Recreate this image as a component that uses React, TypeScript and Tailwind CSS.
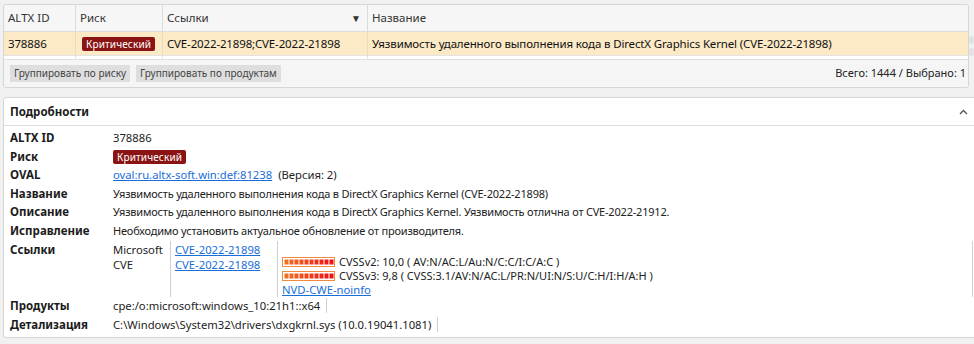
import React from "react";

const font = { fontFamily: '"Noto Sans", "Open Sans", sans-serif' };

function CvssBar({ filled }: { filled: number }) {
  const segs = Array.from({ length: 10 });
  return (
    <svg width="53" height="10" viewBox="0 0 53 10" className="shrink-0">
      <rect x="0.5" y="0.5" width="52" height="9" fill="#fff" stroke="#f08a3c" />
      {segs.map((_, i) => {
        const t = i / 9;
        const g = Math.round(110 - t * 95);
        const b = Math.round(30 - t * 12);
        return (
          <rect
            key={i}
            x={2.5 + i * 5}
            y={2.5}
            width={4}
            height={5}
            fill={i < filled ? `rgb(240,${g},${b})` : "#f4c9a8"}
          />
        );
      })}
    </svg>
  );
}

function Badge() {
  return (
    <span className="inline-flex items-center h-[14px] px-[4px] rounded-[2px] bg-[#8a1414] text-white text-[10px] leading-none tracking-[0.15px]">
      Критический
    </span>
  );
}

function Row({ label, children, latin }: { label: string; children: React.ReactNode; latin?: boolean }) {
  return (
    <div className="flex items-start min-h-[18.5px]">
      <div className="w-[103px] shrink-0 font-bold text-[11.5px] leading-[18.5px] text-[#1b1b1b]">{label}</div>
      <div
        className={
          latin
            ? "flex-1 text-[11.25px] leading-[18.5px] text-[#222]"
            : "flex-1 text-[11px] tracking-[-0.2px] leading-[18.5px] text-[#222]"
        }
      >
        {children}
      </div>
    </div>
  );
}

export default function App() {
  return (
    <div className="w-[974px] h-[344px] bg-[#f1f1f1] overflow-hidden relative" style={font}>
      {/* Top table panel */}
      <div className="ml-[3px] mt-[4px] w-[966px] h-[84px] border border-[#d6d6d6] rounded-[3px] bg-[#f7f7f7] flex flex-col overflow-hidden">
        <div className="flex h-[27px] border-b border-[#dcdcdc] bg-[#f6f6f6] text-[11.5px] text-[#333]">
          <div className="w-[72px] shrink-0 px-[4px] flex items-center border-r border-[#dcdcdc]">ALTX ID</div>
          <div className="w-[87px] shrink-0 px-[4px] flex items-center border-r border-[#dcdcdc]">Риск</div>
          <div className="w-[205px] shrink-0 px-[4px] pr-[6px] flex items-center justify-between border-r border-[#dcdcdc]">
            <span>Ссылки</span>
            <span className="text-[10px] text-[#333]">▼</span>
          </div>
          <div className="flex-1 px-[4px] flex items-center">Название</div>
        </div>
        <div className="flex h-[24px] bg-[#fce9c6] text-[11.5px] tracking-[-0.15px] text-[#111] border-b border-[#e3e3e3]">
          <div className="w-[72px] shrink-0 px-[4px] flex items-center border-r border-[#e6dcc6]">378886</div>
          <div className="w-[87px] shrink-0 pl-[6px] flex items-center border-r border-[#e6dcc6]">
            <Badge />
          </div>
          <div className="w-[205px] shrink-0 px-[4px] flex items-center border-r border-[#e6dcc6]">CVE-2022-21898;CVE-2022-21898</div>
          <div className="flex-1 px-[4px] flex items-center">Уязвимость удаленного выполнения кода в DirectX Graphics Kernel (CVE-2022-21898)</div>
        </div>
        <div className="flex h-[3px] bg-white">
          <div className="w-[72px] border-r border-[#e3e3e3]" />
          <div className="w-[87px] border-r border-[#e3e3e3]" />
          <div className="w-[205px] border-r border-[#e3e3e3]" />
          <div className="flex-1" />
        </div>
        <div className="flex-1 flex items-center justify-between px-[6px] border-t border-[#e0e0e0] bg-[#f5f5f5]">
          <div className="flex gap-[6px]">
            <span className="h-[17px] px-[4px] bg-[#dedede] text-[10px] text-[#444] flex items-center">Группировать по риску</span>
            <span className="h-[17px] px-[4px] bg-[#dedede] text-[10px] text-[#444] flex items-center">Группировать по продуктам</span>
          </div>
          <span className="text-[11px] text-[#222] -mr-[4px]">Всего: 1444 / Выбрано: 1</span>
        </div>
      </div>
      {/* scrollbar bits */}
      <div className="absolute left-[969px] top-[36px] w-[5px] h-[8px] rounded-[2px] bg-[#e2e2e2]" />
      <div className="absolute left-[969px] top-[48px] w-[5px] h-[8px] rounded-[2px] bg-[#e2e2e2]" />

      {/* Details panel */}
      <div className="ml-[3px] mt-[9px] w-[975px] h-[241px] border border-[#d6d6d6] rounded-[3px] bg-white flex flex-col">
        <div className="h-[28px] shrink-0 flex items-center justify-between pl-[6px] pr-[8px] border-b border-[#dcdcdc]">
          <span className="font-bold text-[11.5px] text-[#1b1b1b]">Подробности</span>
          <svg width="9" height="6" viewBox="0 0 9 6" className="mr-[1px]">
            <path d="M1 5 L4.5 1.5 L8 5" fill="none" stroke="#555" strokeWidth="1.4" />
          </svg>
        </div>
        <div className="pl-[6px] pt-[3px] flex flex-col">
          <Row label="ALTX ID" latin>378886</Row>
          <Row label="Риск">
            <Badge />
          </Row>
          <Row label="OVAL" latin>
            <span className="text-[#1a6ed8] underline">oval:ru.altx-soft.win:def:81238</span>
            <span className="ml-[6px]">(Версия: 2)</span>
          </Row>
          <Row label="Название">Уязвимость удаленного выполнения кода в DirectX Graphics Kernel (CVE-2022-21898)</Row>
          <Row label="Описание">
            Уязвимость удаленного выполнения кода в DirectX Graphics Kernel. Уязвимость отлична от CVE-2022-21912.
          </Row>
          <Row label="Исправление">Необходимо установить актуальное обновление от производителя.</Row>
          <div className="flex items-start mt-[1px]">
            <div className="w-[103px] shrink-0 font-bold text-[11.5px] leading-[15px] text-[#1b1b1b] pt-[1px]">Ссылки</div>
            <div className="flex-1 flex h-[56px] text-[11.25px] leading-[15px] text-[#222]">
              <div className="w-[58px] shrink-0 pt-[1px] border-r border-[#d0d0d0]">
                <div>Microsoft</div>
                <div>CVE</div>
              </div>
              <div className="w-[107px] shrink-0 pl-[4px] pt-[1px] border-r border-[#d0d0d0]">
                <div className="text-[#1a6ed8] underline">CVE-2022-21898</div>
                <div className="text-[#1a6ed8] underline">CVE-2022-21898</div>
              </div>
              <div className="flex-1 pl-[4px] pt-[14px] border-r border-[#d0d0d0] mr-[4px] text-[11px] leading-[14px]">
                <div className="flex items-center gap-[4px]">
                  <CvssBar filled={10} />
                  <span>CVSSv2: 10,0 ( AV:N/AC:L/Au:N/C:C/I:C/A:C )</span>
                </div>
                <div className="flex items-center gap-[4px]">
                  <CvssBar filled={10} />
                  <span>CVSSv3: 9,8 ( CVSS:3.1/AV:N/AC:L/PR:N/UI:N/S:U/C:H/I:H/A:H )</span>
                </div>
                <div className="text-[#1a6ed8] underline text-[11.25px]">NVD-CWE-noinfo</div>
              </div>
            </div>
          </div>
          <Row label="Продукты" latin>
            <span className="pr-[6px] border-r border-[#d0d0d0]">cpe:/o:microsoft:windows_10:21h1::x64</span>
          </Row>
          <Row label="Детализация" latin>
            <span className="pr-[6px] border-r border-[#d0d0d0]">C:\Windows\System32\drivers\dxgkrnl.sys (10.0.19041.1081)</span>
          </Row>
        </div>
      </div>
    </div>
  );
}
